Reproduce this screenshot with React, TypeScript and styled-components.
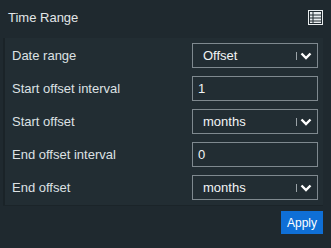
import styled, { createGlobalStyle } from 'styled-components';

const GlobalStyle = createGlobalStyle`
    html, body {
        margin: 0;
        padding: 0;
        background: #1f292f;
    }
    body {
        font-family: "Liberation Sans", Arial, sans-serif;
        color: #dfe3e6;
    }
`;

const Card = styled.div`
    width: 331px;
    height: 248px;
    background: #1f292f;
    display: flex;
    flex-direction: column;
    box-sizing: border-box;
`;

const Header = styled.div`
    height: 38px;
    display: flex;
    align-items: center;
    justify-content: space-between;
    padding: 0 8px 4px 8px;
    box-sizing: border-box;
    font-size: 13px;
    color: #e2e6e8;
`;

const MenuButton = styled.button`
    background: none;
    border: none;
    padding: 0;
    display: flex;
    cursor: pointer;
`;

const Body = styled.div`
    margin: 0 8px 0 3px;
    background: #222d33;
    border-left: 2px solid #1a2328;
    box-shadow: 0 1px 0 #1b2429;
    padding: 5px 5px 5px 7px;
    display: flex;
    flex-direction: column;
    gap: 8px;
`;

const Row = styled.div`
    display: flex;
    align-items: center;
    justify-content: space-between;
    height: 25px;
`;

const Label = styled.label`
    font-size: 13px;
    color: #dde1e4;
`;

const Field = styled.div`
    width: 126px;
    height: 25px;
    box-sizing: border-box;
    border: 1px solid #7f898f;
    display: flex;
    align-items: center;
    font-size: 13px;
    color: #f2f4f5;
`;

const Text = styled.span<{ $indent: number }>`
    flex: 1;
    padding-left: ${(p) => p.$indent}px;
`;

const Caret = styled.span`
    display: flex;
    align-items: center;
    gap: 3px;
    padding-right: 5px;
`;

const Bar = styled.span`
    width: 1px;
    height: 8px;
    background: #9aa2a7;
`;

const Footer = styled.div`
    display: flex;
    justify-content: flex-end;
    padding: 6px 8px 0 0;
`;

const ApplyButton = styled.button`
    width: 42px;
    height: 23px;
    background: #0f6fd6;
    border: none;
    color: #ffffff;
    font-family: "Liberation Sans", Arial, sans-serif;
    font-size: 12px;
    padding: 0;
`;

function Chevron() {
    return (
        <svg width="12" height="8" viewBox="0 0 12 8">
            <path d="M1.5 1.5 L6 6 L10.5 1.5" fill="none" stroke="#ffffff" strokeWidth="2.4" />
        </svg>
    );
}

function ListIcon() {
    return (
        <svg width="15" height="15" viewBox="0 0 15 15">
            <rect x="0.5" y="0.5" width="14" height="14" fill="none" stroke="#e8ecee" />
            <rect x="2" y="2" width="11" height="11" fill="#e8ecee" />
            <rect x="2" y="4.5" width="11" height="1" fill="#1f292f" />
            <rect x="2" y="7.5" width="11" height="1" fill="#1f292f" />
            <rect x="2" y="10.5" width="11" height="1" fill="#1f292f" />
            <rect x="4.5" y="2" width="1" height="11" fill="#1f292f" />
        </svg>
    );
}

function Select(props: { value: string }) {
    return (
        <Field>
            <Text $indent={10}>{props.value}</Text>
            <Caret>
                <Bar />
                <Chevron />
            </Caret>
        </Field>
    );
}

function Input(props: { value: string }) {
    return (
        <Field>
            <Text $indent={5}>{props.value}</Text>
        </Field>
    );
}

const rows = [
    { label: 'Date range', kind: 'select', value: 'Offset' },
    { label: 'Start offset interval', kind: 'input', value: '1' },
    { label: 'Start offset', kind: 'select', value: 'months' },
    { label: 'End offset interval', kind: 'input', value: '0' },
    { label: 'End offset', kind: 'select', value: 'months' },
];

export default function App() {
    return (
        <>
            <GlobalStyle />
            <Card>
                <Header>
                    <span>Time Range</span>
                    <MenuButton>
                        <ListIcon />
                    </MenuButton>
                </Header>
                <Body>
                    {rows.map((r, i) => (
                        <Row key={i}>
                            <Label>{r.label}</Label>
                            {r.kind === 'select' ? <Select value={r.value} /> : <Input value={r.value} />}
                        </Row>
                    ))}
                </Body>
                <Footer>
                    <ApplyButton>Apply</ApplyButton>
                </Footer>
            </Card>
        </>
    );
}
